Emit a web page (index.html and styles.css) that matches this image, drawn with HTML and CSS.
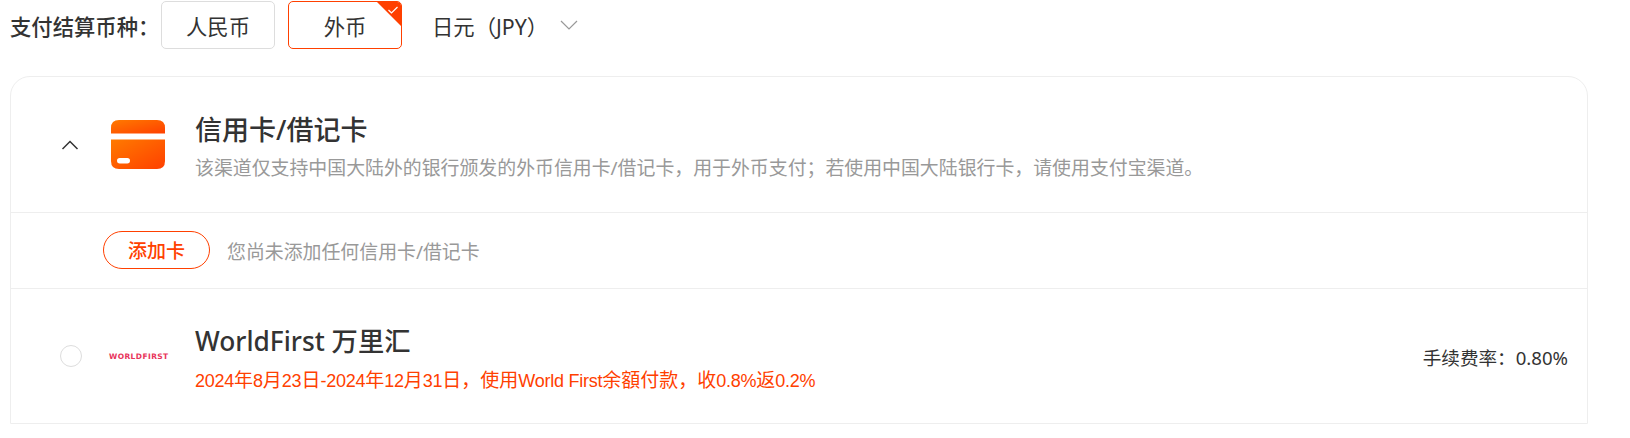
FILE: index.html
```html
<!DOCTYPE html>
<html lang="zh-CN">
<head>
    <meta charset="UTF-8">
    <title>支付结算币种</title>
    <link rel="stylesheet" href="styles.css">
</head>
<body>
    <div class="currency-row">
        <span class="currency-label">支付结算币种：</span>
        <div class="currency-btn">人民币</div>
        <div class="currency-btn active">
            外币
            <span class="corner"></span>
            <svg class="corner-check" width="12" height="10" viewBox="0 0 12 10"><path d="M1.5 5 L4.5 8 L10.5 2" fill="none" stroke="#fff" stroke-width="1.2"/></svg>
        </div>
        <div class="currency-select">
            <span>日元（JPY）</span>
            <svg width="18" height="10" viewBox="0 0 18 10"><path d="M1 1 L9 9 L17 1" fill="none" stroke="#999" stroke-width="1.2"/></svg>
        </div>
    </div>

    <div class="pay-card">
        <div class="pay-row row-card">
            <div class="toggle">
                <svg width="18" height="10" viewBox="0 0 18 10"><path d="M1.5 9 L9 1.5 L16.5 9" fill="none" stroke="#333" stroke-width="1.5"/></svg>
            </div>
            <div class="pay-icon card-icon">
                <svg width="54" height="49" viewBox="0 0 54 49">
                    <defs>
                        <linearGradient id="cardGrad" x1="0" y1="0" x2="1" y2="1">
                            <stop offset="0" stop-color="#ff7a00"/>
                            <stop offset="1" stop-color="#ff4000"/>
                        </linearGradient>
                    </defs>
                    <path d="M0 13.5 V8 Q0 0 8 0 H46 Q54 0 54 8 V13.5 Z" fill="url(#cardGrad)"/>
                    <path d="M0 19.5 H54 V41 Q54 49 46 49 H8 Q0 49 0 41 Z" fill="url(#cardGrad)"/>
                    <rect x="6" y="38" width="13" height="5.5" rx="2.75" fill="#fff"/>
                </svg>
            </div>
            <div class="pay-info card-info">
                <div class="pay-title">信用卡/借记卡</div>
                <div class="pay-desc">该渠道仅支持中国大陆外的银行颁发的外币信用卡/借记卡，用于外币支付；若使用中国大陆银行卡，请使用支付宝渠道。</div>
            </div>
        </div>
        <div class="pay-row row-add">
            <div class="add-btn">添加卡</div>
            <span class="add-tip">您尚未添加任何信用卡/借记卡</span>
        </div>
        <div class="pay-row row-wf">
            <div class="toggle"><span class="radio"></span></div>
            <div class="pay-icon"><span class="wf-logo">WORLDFIRST</span></div>
            <div class="pay-info wf-info">
                <div class="pay-title">WorldFirst 万里汇</div>
                <div class="pay-promo"><span class="num">2024</span>年<span class="num">8</span>月<span class="num">23</span>日<span class="num">-2024</span>年<span class="num">12</span>月<span class="num">31</span>日，使用<span class="num">World First</span>余額付款，收<span class="num">0.8%</span>返<span class="num">0.2%</span></div>
            </div>
            <div class="pay-fee">手续费率：0.80%</div>
        </div>
    </div>
</body>
</html>
```

FILE: styles.css
```css
body {
    margin: 0;
    padding: 0 42px 0 10px;
    background: #fff;
    color: #333;
    font-family: "Noto Sans", "Noto Sans CJK SC", sans-serif;
}

.currency-row {
    display: flex;
    align-items: center;
    height: 48px;
    margin-top: 1px;
}

.currency-label {
    font-size: 21.33px;
    font-weight: 500;
    width: 151px;
    white-space: nowrap;
}

.currency-btn {
    position: relative;
    box-sizing: border-box;
    width: 114px;
    height: 48px;
    margin-right: 13px;
    display: flex;
    justify-content: center;
    align-items: center;
    border: 1px solid #ddd;
    border-radius: 5px;
    font-size: 21.33px;
    overflow: hidden;
}

.currency-btn.active {
    border-color: #ff4000;
}

/* 오른쪽 위 삼각형 */
.corner {
    position: absolute;
    top: -1px;
    right: -1px;
    width: 26px;
    height: 26px;
    background: #ff4000;
    clip-path: polygon(0 0, 100% 0, 100% 100%);
}

.corner-check {
    position: absolute;
    top: 3px;
    right: 2px;
}

.currency-select {
    display: flex;
    align-items: center;
    gap: 12px;
    margin-left: 17px;
    font-size: 21.33px;
}

.pay-card {
    margin-top: 27px;
    border: 1px solid #eee;
    border-radius: 20px 20px 0 0;
}

.pay-row {
    display: flex;
    align-items: center;
}

.row-card {
    height: 135px;
}

.toggle {
    width: 113px;
    display: flex;
    flex-shrink: 0;
}

.toggle svg {
    margin-left: 50px;
}

.pay-icon {
    width: 72px;
    flex-shrink: 0;
    margin-left: -13px;
    margin-right: 12px;
}

.card-icon {
    margin-top: 4px;
}

.card-info {
    margin-top: 4px;
}

.pay-title {
    font-size: 27px;
    font-weight: 500;
    line-height: 36px;
}

.pay-desc {
    margin-top: 6px;
    font-size: 18.9px;
    line-height: 28px;
    color: #999;
}

.row-add {
    height: 73px;
    padding-bottom: 2px;
    border-top: 1px solid #eee;
    border-bottom: 1px solid #eee;
    padding-left: 92px;
}

.add-btn {
    box-sizing: border-box;
    width: 107px;
    height: 38px;
    display: flex;
    justify-content: center;
    align-items: center;
    border: 1px solid #ff4000;
    border-radius: 19px;
    color: #ff4000;
    font-size: 19px;
    font-weight: 500;
}

.add-tip {
    margin-left: 17px;
    margin-top: 2px;
    font-size: 18.9px;
    color: #999;
}

.row-wf {
    height: 134px;
}

.radio {
    box-sizing: border-box;
    display: block;
    width: 22px;
    height: 22px;
    margin-left: 49px;
    border: 1px solid #ddd;
    border-radius: 50%;
}

.wf-logo {
    display: block;
    font-family: "DejaVu Sans", sans-serif;
    font-size: 7.5px;
    font-weight: bold;
    letter-spacing: 0.4px;
    color: #e8335a;
    white-space: nowrap;
    margin-left: -2px;
}

.wf-info {
    margin-top: 5px;
}

.wf-info .pay-title {
    font-size: 26.3px;
}

.pay-promo {
    margin-top: 7px;
    font-size: 19px;
    line-height: 28px;
    color: #ff4000;
}

.num {
    font-family: "Liberation Sans", sans-serif;
    font-size: 18px;
    letter-spacing: -0.25px;
}

.pay-fee {
    margin-left: auto;
    padding-right: 19px;
    font-size: 18.6px;
}
```
